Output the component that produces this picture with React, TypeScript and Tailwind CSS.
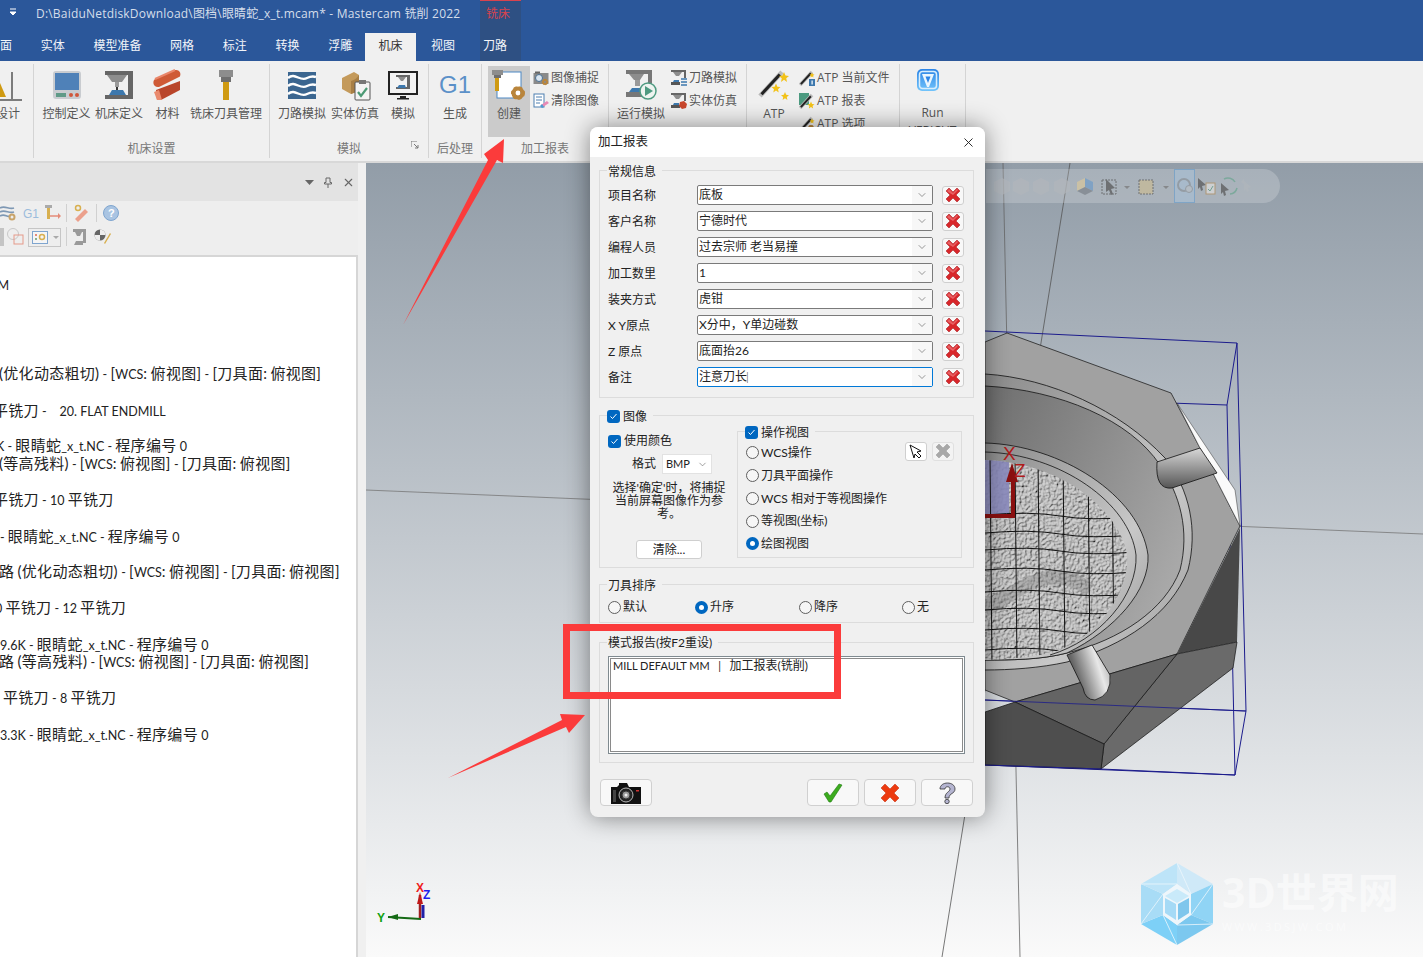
import { FC, ReactNode } from 'react'
import { ChevronDown, X } from 'lucide-react'

// ---------- ribbon icons ----------
const Svg: FC<{ w?: number, h?: number, children: ReactNode }> = ({ w = 32, h = 32, children }) => (
  <svg width={w} height={h} viewBox={`0 0 ${w} ${h}`} className="shrink-0">{children}</svg>
)

const IconControl = () => (
  <Svg>
    <rect x="2" y="2" width="28" height="28" rx="3" fill="#c9ccd0" />
    <rect x="4" y="4" width="24" height="17" fill="#4f81b8" />
    <rect x="5" y="24" width="10" height="4" fill="#5f9a87" />
    <circle cx="20" cy="26" r="2" fill="#d0573a" />
    <circle cx="26" cy="26" r="2" fill="#d0573a" />
  </Svg>
)
const IconMachine = () => (
  <Svg>
    <path d="M2 2h28v28H2v-4h23V6H2z" fill="#666" />
    <path d="M4 6h20l-5 7h-10z" fill="#8d8d8d" />
    <rect x="12" y="13" width="4" height="5" fill="#9a9a9a" />
    <rect x="13" y="18" width="2" height="3" fill="#333" />
    <path d="M6 26l3-5h11l3 5z" fill="#3d78ad" />
  </Svg>
)
const IconMaterial = () => (
  <Svg>
    <path d="M3 10L23 1c5-1 7 5 4 7L7 18c-6 1-7-6-4-8z" fill="#cf5a36" />
    <path d="M3 10L23 1" stroke="#e9866a" strokeWidth="2" />
    <path d="M4 21l24-9v9L9 31H5z" fill="#b9452a" />
    <path d="M2 23l5-2 3 10H5z" fill="#ea8a6e" />
  </Svg>
)
const IconTool = () => (
  <Svg>
    <rect x="9" y="1" width="14" height="7" fill="#8d8d8d" />
    <rect x="11" y="8" width="10" height="5" fill="#6f6f6f" />
    <rect x="13" y="13" width="6" height="18" fill="#cf9a12" />
  </Svg>
)
const IconWaves = () => (
  <Svg>
    <rect x="2" y="3" width="28" height="27" fill="#3b6690" />
    <path d="M2 9c7-6 12 4 19 0 4-2 6-2 9-1M2 17c7-6 12 4 19 0 4-2 6-2 9-1M2 25c7-6 12 4 19 0 4-2 6-2 9-1" stroke="#fff" strokeWidth="2.4" fill="none" />
  </Svg>
)
const IconSolidSim = () => (
  <Svg>
    <path d="M3 9l12-6 5 3v16l-8 3-9-5z" fill="#c49a5b" />
    <path d="M12 12c4-1 6-3 8-6v16l-8 3z" fill="#a87f45" />
    <rect x="16" y="13" width="15" height="18" rx="1" fill="#f4f4f4" stroke="#555" />
    <rect x="20" y="11" width="7" height="4" fill="#777" />
    <path d="M19 23l3 4 6-8" stroke="#4c9a75" strokeWidth="2.2" fill="none" />
  </Svg>
)
const IconMonitor = () => (
  <Svg>
    <rect x="1" y="2" width="30" height="24" fill="#222" />
    <rect x="3" y="4" width="26" height="20" fill="#f3f3f3" />
    <path d="M9 6h14v14H9v-2h11V8H9z" fill="#666" />
    <path d="M11 8h8l-3 4h-2z" fill="#8d8d8d" />
    <path d="M10 19l2-3h6l1 3z" fill="#3d78ad" />
    <rect x="13" y="27" width="6" height="2" fill="#222" />
    <rect x="10" y="29" width="12" height="1.5" fill="#222" />
  </Svg>
)
const Gear: FC<{ x: number, y: number, r: number }> = ({ x, y, r }) => (
  <g>
    <circle cx={x} cy={y} r={r} fill="none" stroke="#b9853c" strokeWidth={r * 0.9} />
    <circle cx={x} cy={y} r={r * 1.35} fill="none" stroke="#b9853c" strokeWidth={r * 0.4} strokeDasharray={`${r * 0.7} ${r * 0.6}`} />
  </g>
)
const IconCreate = () => (
  <Svg w={34} h={32}>
    <rect x="5" y="3" width="24" height="26" fill="#fff" stroke="#4d88c4" />
    <rect x="0" y="1" width="11" height="5" fill="#8d8d8d" />
    <rect x="2" y="6" width="7" height="3" fill="#6f6f6f" />
    <rect x="3" y="9" width="4" height="13" fill="#cf9a12" />
    <Gear x={26} y={24} r={4.5} />
  </Svg>
)
const IconCapture = () => (
  <Svg w={16} h={16}>
    <rect x="0.5" y="3" width="15" height="11" fill="#8a8a8a" />
    <rect x="2" y="1.5" width="5" height="2" fill="#666" />
    <circle cx="6" cy="8" r="3.5" fill="#d9e5f0" stroke="#4a6f90" />
    <Gear x={12} y={12} r={2} />
  </Svg>
)
const IconClear = () => (
  <Svg w={16} h={16}>
    <rect x="1" y="1" width="10" height="13" fill="#fff" stroke="#4d7fb0" />
    <path d="M3 4h6M3 7h6M3 10h4" stroke="#4d7fb0" />
    <path d="M8 12l6-4 2 2-6 4z" fill="#e889b5" />
    <path d="M7 13l2-2 2 3-2 1z" fill="#4d9ad0" />
  </Svg>
)
const IconRunSim = () => (
  <Svg w={32} h={32}>
    <path d="M1 1h26v14h-4V5H1z" fill="#777" />
    <path d="M4 5h15l-4 6h-6z" fill="#8d8d8d" />
    <rect x="10" y="11" width="5" height="6" fill="#9a9a9a" />
    <path d="M4 23l3-4h9v4z" fill="#3d78ad" />
    <rect x="1" y="23" width="16" height="5" fill="#777" />
    <circle cx="23" cy="22" r="8" fill="#eef4f0" stroke="#4d9a80" strokeWidth="1.5" />
    <path d="M20 17l8 5-8 5z" fill="#4d9a80" />
  </Svg>
)
const IconSmallMachine: FC<{ red?: boolean }> = ({ red }) => (
  <Svg w={16} h={16}>
    <path d="M0 0h15v8h-2V2H0z" fill="#666" />
    <path d="M2 2h9l-3 4H5z" fill="#8d8d8d" />
    <rect x="0" y="12" width="9" height="3" fill="#555" />
    <path d="M2 12l1-2h5v2z" fill="#3d78ad" />
    {red ? <path d="M9 9l4-1 3 3-1 4-4 1-3-3z" fill="#c9472c" /> : <path d="M10 9h6M10 12h6M10 15h6" stroke="#3d78ad" strokeWidth="1.5" />}
  </Svg>
)
const Wand: FC<{ x1: number, y1: number, x2: number, y2: number, w: number }> = ({ x1, y1, x2, y2, w }) => (
  <g>
    <line x1={x1} y1={y1} x2={x2} y2={y2} stroke="#bbb" strokeWidth={w + 1.5} />
    <line x1={x1 + (x2 - x1) * 0.07} y1={y1 + (y2 - y1) * 0.07} x2={x1 + (x2 - x1) * 0.9} y2={y1 + (y2 - y1) * 0.9} stroke="#222" strokeWidth={w} />
  </g>
)
const Star: FC<{ x: number, y: number, r: number }> = ({ x, y, r }) => (
  <polygon fill="#f2c218" points={`${x},${y - r} ${x + r * 0.3},${y - r * 0.3} ${x + r},${y - r * 0.2} ${x + r * 0.45},${y + r * 0.25} ${x + r * 0.6},${y + r} ${x},${y + r * 0.55} ${x - r * 0.6},${y + r} ${x - r * 0.45},${y + r * 0.25} ${x - r},${y - r * 0.2} ${x - r * 0.3},${y - r * 0.3}`} />
)
const IconAtp = () => (
  <Svg>
    <Wand x1={2} y1={27} x2={24} y2={3} w={3} />
    <Star x={26} y={8} r={5} />
    <Star x={18} y={19} r={4.5} />
    <Star x={27} y={27} r={4} />
  </Svg>
)
const IconAtpSmall: FC<{ kind: 'file' | 'report' | 'option' }> = ({ kind }) => (
  <Svg w={16} h={16}>
    {kind === 'report' && <path d="M0 0h10v12H0z" fill="#4c9a80" />}
    <Wand x1={1} y1={15} x2={13} y2={2} w={2} />
    {kind === 'file' && <><rect x="10" y="9" width="6" height="7" fill="#3d78ad" /><rect x="12.5" y="10.5" width="1.2" height="4" fill="#fff" /></>}
    {kind === 'report' && <Star x={12} y={12} r={3.5} />}
    {kind === 'option' && <Gear x={12} y={12} r={2} />}
    {kind !== 'report' && <Star x={13} y={5} r={2.5} />}
  </Svg>
)
const IconVericut = () => (
  <Svg w={24} h={24}>
    <defs>
      <linearGradient id="vcut" x1="0" y1="0" x2="0" y2="1">
        <stop offset="0" stopColor="#2b84e6" />
        <stop offset="1" stopColor="#72c4fb" />
      </linearGradient>
    </defs>
    <rect x="1" y="1" width="22" height="22" rx="5" fill="url(#vcut)" />
    <rect x="3.500" y="3.500" width="17" height="17" rx="3" fill="none" stroke="#d9eefc" strokeWidth="1.500" />
    <path d="M6 6h12l-5 13h-2z" fill="#eaf6fe" />
    <path d="M9.500 8.500h5L12 15z" fill="#2b84e6" />
  </Svg>
)

const RibbonLabel: FC<{ children: ReactNode }> = ({ children }) => (
  <span className="text-xs leading-4 text-[#555] whitespace-nowrap">{children}</span>
)
const LargeBtn: FC<{ w: string, icon: ReactNode, label: string, active?: boolean }> = ({ w, icon, label, active }) => (
  <div className={`${w} flex h-[71px] flex-col items-center ${active ? 'bg-[#cbcbcb]' : ''}`}>
    <div className="flex h-[38px] items-start justify-center pt-[3px]">{icon}</div>
    <div className="leading-4"><RibbonLabel>{label}</RibbonLabel></div>
  </div>
)
const SmallBtn: FC<{ icon: ReactNode, label: string }> = ({ icon, label }) => (
  <div className="flex h-[23px] items-center gap-[2px]">{icon}<RibbonLabel>{label}</RibbonLabel></div>
)
const Group: FC<{ w: string, label?: string, children: ReactNode, launcher?: boolean, pad?: string }> = ({ w, label, children, launcher, pad = '' }) => (
  <div className={`${w} relative flex shrink-0 flex-col border-r border-[#d4d4d4] my-[1px] h-[94px]`}>
    <div className={`flex h-[72px] mt-[2px] ${pad}`}>{children}</div>
    <div className="mt-[3px] text-center text-xs leading-4 text-[#777]">{label}</div>
    {launcher && (
      <svg width="8" height="8" viewBox="0 0 8 8" className="absolute right-[9px] bottom-[9px]">
        <path d="M0 6V0h6M3 3l4 4M7 4v3H4" fill="none" stroke="#777" />
      </svg>
    )}
  </div>
)

const tabs = ['实体', '模型准备', '网格', '标注', '转换', '浮雕']

const TopBar = () => (
  <div className="relative h-[61px] shrink-0 bg-[#2b579a]">
    <div className="flex h-[33px] items-start">
      <svg width="8" height="8" viewBox="0 0 8 8" className="mt-[8px] ml-[9px]">
        <path d="M1 1h6M1 4h6L4 7z" stroke="#fff" fill="#fff" />
      </svg>
      <span className="ml-[19px] mt-[5px] text-xs leading-[18px] tracking-[0.2px] whitespace-nowrap text-[#d5deeb]">D:\BaiduNetdiskDownload\图档\眼睛蛇_x_t.mcam* - Mastercam 铣削 2022</span>
    </div>
    <div className="flex h-[26px] items-center gap-[28.700px] text-xs text-[#f3f5f9]">
      <div className="w-[12px] shrink-0 overflow-hidden">面</div>
      {tabs.map((t) => (
        <div key={t} className="shrink-0">{t}</div>
      ))}
    </div>
    <div className="absolute top-0 left-[480px] flex h-[61px] w-[41px] flex-col border-t border-[#d9434e] bg-[#2e5083] text-xs">
      <span className="mt-[5px] ml-[6px] text-[#d9434e]">铣床</span>
      <span className="mt-[16px] ml-[3px] text-[#f3f5f9]">刀路</span>
    </div>
    <div className="absolute top-[33px] left-[365px] flex h-[29px] w-[51px] items-center justify-center bg-[#f0f0f0] pb-[3px] text-xs text-[#333]">机床</div>
    <div className="absolute top-[38px] left-[423px] w-[40px] text-center text-xs leading-[16px] text-[#f3f5f9]">视图</div>
  </div>
)

const Ribbon = () => (
  <div className="flex h-[102px] shrink-0 items-start overflow-hidden border-b-2 border-[#d8d8d8] bg-[#f0f0f0] pt-[2px]">
    <Group w="w-[34px]">
      <div className="relative w-[33px]">
        <svg width="24" height="32" viewBox="0 0 24 32" className="absolute top-[5px] left-0">
          <path d="M0 12L6 26H0z" fill="#cf9a12" />
          <path d="M12 1v27M0 29h22" stroke="#555" strokeWidth="1.5" />
        </svg>
        <div className="absolute top-[38px] right-[13px] leading-4"><RibbonLabel>设计</RibbonLabel></div>
      </div>
    </Group>
    <Group w="w-[236px]" label="机床设置" pad="pl-[6px]">
      <LargeBtn w="w-[53px]" icon={<IconControl />} label="控制定义" />
      <LargeBtn w="w-[52px]" icon={<IconMachine />} label="机床定义" />
      <LargeBtn w="w-[45px]" icon={<IconMaterial />} label="材料" />
      <LargeBtn w="w-[72px]" icon={<IconTool />} label="铣床刀具管理" />
    </Group>
    <Group w="w-[159px]" label="模拟" pad="pl-[6px]" launcher>
      <LargeBtn w="w-[52px]" icon={<IconWaves />} label="刀路模拟" />
      <LargeBtn w="w-[54px]" icon={<IconSolidSim />} label="实体仿真" />
      <LargeBtn w="w-[42px]" icon={<IconMonitor />} label="模拟" />
    </Group>
    <Group w="w-[53px]" label="后处理">
      <div className="w-full">
        <div className="flex h-[38px] justify-center pt-[2px] text-[24px] leading-[34px] text-[#5b90c8] [font-family:'Liberation_Sans',sans-serif]">G1</div>
        <div className="text-center leading-4"><RibbonLabel>生成</RibbonLabel></div>
      </div>
    </Group>
    <Group w="w-[127px]" label="加工报表" pad="pl-[6px]">
      <LargeBtn w="w-[42px]" icon={<IconCreate />} label="创建" active />
      <div className="ml-[3px] flex flex-col">
        <SmallBtn icon={<IconCapture />} label="图像捕捉" />
        <SmallBtn icon={<IconClear />} label="清除图像" />
      </div>
    </Group>
    <Group w="w-[138px]" pad="pl-[6px]">
      <LargeBtn w="w-[52px]" icon={<IconRunSim />} label="运行模拟" />
      <div className="ml-[4px] flex flex-col">
        <SmallBtn icon={<IconSmallMachine />} label="刀路模拟" />
        <SmallBtn icon={<IconSmallMachine red />} label="实体仿真" />
      </div>
    </Group>
    <Group w="w-[153px]" pad="pl-[10px]">
      <LargeBtn w="w-[34px]" icon={<IconAtp />} label="ATP" />
      <div className="ml-[8px] flex flex-col">
        <SmallBtn icon={<IconAtpSmall kind="file" />} label="ATP 当前文件" />
        <SmallBtn icon={<IconAtpSmall kind="report" />} label="ATP 报表" />
        <SmallBtn icon={<IconAtpSmall kind="option" />} label="ATP 选项" />
      </div>
    </Group>
    <Group w="w-[66px]">
      <div className="flex w-full flex-col items-center pt-[2px]">
        <div className="mr-[10px]"><IconVericut /></div>
        <div className="mt-[11px] text-center leading-4"><RibbonLabel>Run</RibbonLabel><br /><RibbonLabel>VERICUT</RibbonLabel></div>
      </div>
    </Group>
  </div>
)

// ---------- left panel ----------
const lines: [string, string][] = [
  ['mt-[18px] ml-[-14px]', 'MM'],
  ['mt-[71px] ml-[-1px]', '(优化动态粗切) - [WCS: 俯视图] - [刀具面: 俯视图]'],
  ['mt-[19px] ml-[-7px]', '平铣刀 -    20. FLAT ENDMILL'],
  ['mt-[17px] ml-[-4px]', 'K - 眼睛蛇_x_t.NC - 程序编号 0'],
  ['mt-0 ml-[-1px]', '(等高残料) - [WCS: 俯视图] - [刀具面: 俯视图]'],
  ['mt-[18px] ml-[-7px]', '平铣刀 - 10 平铣刀'],
  ['mt-[19px] ml-0', '- 眼睛蛇_x_t.NC - 程序编号 0'],
  ['mt-[17px] ml-[-1px]', '路 (优化动态粗切) - [WCS: 俯视图] - [刀具面: 俯视图]'],
  ['mt-[18px] ml-[-5px]', '0 平铣刀 - 12 平铣刀'],
  ['mt-[19px] ml-0', '9.6K - 眼睛蛇_x_t.NC - 程序编号 0'],
  ['mt-[-1px] ml-[-1px]', '路 (等高残料) - [WCS: 俯视图] - [刀具面: 俯视图]'],
  ['mt-[18px] ml-[3px]', '平铣刀 - 8 平铣刀'],
  ['mt-[19px] ml-0', '3.3K - 眼睛蛇_x_t.NC - 程序编号 0'],
]

// the CJK glyphs and brackets in this log run larger than the latin ones
const Mixed: FC<{ text: string }> = ({ text }) => (
  <>
    {text.split(/([\u4e00-\u9fff()\[\]:]+)/).map((part, i) =>
      i % 2 === 1
        ? <span key={i} className="text-[15px] tracking-[0.3px]">{part}</span>
        : <span key={i} className="text-[12.500px]">{part}</span>
    )}
  </>
)

const DockToolbar = () => (
  <div className="flex h-[54px] flex-col bg-[#eeeeee] pr-[1px]">
    <div className="flex h-[24px] items-center">
      <svg width="120" height="20" viewBox="0 0 120 20">
        <path d="M0 5c5-3 9 2 14 0M0 9c5-3 9 2 14 0M0 13c5-3 7 2 10 0" stroke="#7e98b4" strokeWidth="1.6" fill="none" />
        <circle cx="12" cy="14" r="2.5" fill="none" stroke="#c9a46a" strokeWidth="2" />
        <text x="23" y="15" fontSize="12" fill="#9cbcdc" fontFamily="Liberation Sans">G1</text>
        <rect x="45" y="2" width="7" height="3" fill="#aaa" />
        <rect x="47" y="5" width="3" height="11" fill="#d8b050" />
        <path d="M50 13h8" stroke="#e48b78" strokeWidth="1.5" />
        <path d="M58 10l3 3-3 3z" fill="#e48b78" />
        <line x1="66.500" y1="1" x2="66.500" y2="19" stroke="#d0d0d0" />
        <path d="M75 16l10-10 3 3-10 10z" fill="#eba08c" />
        <circle cx="78" cy="5" r="2.500" fill="none" stroke="#d8b050" strokeWidth="1.500" />
        <line x1="96.500" y1="1" x2="96.500" y2="19" stroke="#d0d0d0" />
        <circle cx="111" cy="10" r="7.500" fill="#a9c4e2" stroke="#7fa5cf" />
        <text x="108" y="14" fontSize="11" fontWeight="700" fill="#fff" fontFamily="Liberation Sans">?</text>
      </svg>
    </div>
    <div className="flex h-[24px] items-center">
      <svg width="120" height="22" viewBox="0 0 120 22">
        <rect x="0" y="2" width="4" height="18" fill="#c4c4c4" />
        <circle cx="13" cy="8" r="5.500" fill="none" stroke="#c8c8c8" />
        <rect x="14" y="9" width="9" height="9" fill="none" stroke="#e59a8a" />
        <rect x="28.500" y="2.500" width="32" height="18" fill="none" stroke="#c6c6c6" />
        <rect x="32.500" y="5.500" width="15" height="12" fill="#f5f5f5" stroke="#7fa5cf" />
        <rect x="35" y="8" width="2" height="2" fill="#e48b78" />
        <rect x="35" y="12" width="2" height="2" fill="#8cb08c" />
        <circle cx="42" cy="11" r="2.500" fill="none" stroke="#d8b050" strokeWidth="1.500" />
        <path d="M53 10h6l-3 3z" fill="#aaa" />
        <line x1="66.500" y1="1" x2="66.500" y2="20" stroke="#d0d0d0" />
        <path d="M73 3h13v14h-3V6H73zM75 6h7l-2 4h-3zM74 19l2-4h7v4z" fill="#9a9a9a" />
        <circle cx="100" cy="9" r="5.500" fill="#666" />
        <path d="M100 3.500a5.500 5.500 0 0 1 5.500 5.500h-5.500zM100 9h-5.500a5.500 5.500 0 0 0 5.500 5.500z" fill="#eee" />
        <path d="M104 17l6-10 1 1-6 10z" fill="#d8b050" />
      </svg>
    </div>
  </div>
)

const LeftPanel = () => (
  <div className="flex w-[358px] shrink-0 flex-col bg-[#e3e3e3]">
    <div className="flex h-[38px] items-center justify-end gap-[9px] pr-[3px]">
      <svg width="9" height="6" viewBox="0 0 9 6" className="mt-[2px]"><path d="M0 0h9L4.500 5z" fill="#666" /></svg>
      <svg width="10" height="11" viewBox="0 0 10 11"><path d="M3 1h4v4.500h1.500V7H1.500V5.500H3zM5 7v4" fill="none" stroke="#666" /></svg>
      <X size={13} strokeWidth={2} className="text-[#666]" />
    </div>
    <DockToolbar />
    <div className="min-h-0 flex-1 overflow-hidden border-t-2 border-r-2 border-[#d6d6d6] bg-white text-[15px] leading-[18px] text-[#222] [font-family:'Lato','Noto_Sans_CJK_SC',sans-serif]">
      {lines.map(([c, t]) => (
        <div key={t} className={`${c} h-[18px] whitespace-pre`}><Mixed text={t} /></div>
      ))}
    </div>
  </div>
)

// ---------- 3D view ----------
const gridH = [515, 533, 550, 570, 592, 610, 630, 650]
const gridV = [990, 1015, 1038, 1063, 1088, 1112]
const floor = 'M985,460 C1060,462 1120,510 1127,555 C1130,600 1085,650 1040,655 C1020,658 1000,660 985,660 Z'

const Model = () => (
  <svg viewBox="366 163 1057 794" className="absolute inset-0 h-full w-full">
    <defs>
      <linearGradient id="wall" x1="0" y1="0" x2="1" y2="0.6">
        <stop offset="0" stopColor="#6e6e6e" />
        <stop offset="1" stopColor="#a8a8a8" />
      </linearGradient>
      <linearGradient id="tube" x1="0" y1="0" x2="1" y2="1">
        <stop offset="0" stopColor="#8a8a8a" />
        <stop offset="0.65" stopColor="#c8c8c8" />
        <stop offset="1" stopColor="#9a9a9a" />
      </linearGradient>
      <linearGradient id="pipe" x1="0" y1="0" x2="0" y2="1">
        <stop offset="0" stopColor="#d8d8d8" />
        <stop offset="1" stopColor="#555" />
      </linearGradient>
      <linearGradient id="pipe2" x1="0" y1="0" x2="1" y2="-0.4">
        <stop offset="0" stopColor="#666" />
        <stop offset="0.5" stopColor="#e8e8e8" />
        <stop offset="1" stopColor="#777" />
      </linearGradient>
      <clipPath id="floor"><path d={floor} /></clipPath>
      <filter id="scales" x="0" y="0" width="1" height="1">
        <feTurbulence type="fractalNoise" baseFrequency="0.38" numOctaves="2" seed="7" />
        <feDiffuseLighting surfaceScale="2.800" diffuseConstant="0.950" lightingColor="#ffffff">
          <feDistantLight azimuth="225" elevation="50" />
        </feDiffuseLighting>
      </filter>
    </defs>

    <line x1="1003" y1="163" x2="1020" y2="957" stroke="#666" strokeWidth="0.800" />
    <line x1="1070" y1="163" x2="942" y2="957" stroke="#555" strokeWidth="0.800" />
    <line x1="366" y1="490" x2="1423" y2="534" stroke="#777" strokeWidth="0.800" />

    <path d="M985,331 L1237,343 L1227,405 L1170,403" fill="none" stroke="#1c1c8c" />
    <path d="M1237,343 L1246,711 L1235,775 L985,765 M1227,405 L1235,775 M985,700 L1246,711" fill="none" stroke="#1c1c8c" />

    <polygon points="985,342 1007,333 1171,393 1200,448 1240,526 1177,654 1015,702 985,690" fill="#a1a1a1" stroke="#222" strokeWidth="0.800" />
    <polygon points="1177,403 1235,490 1240,526 1200,448" fill="#fafafa" stroke="#333" strokeWidth="0.500" />
    <polygon points="1240,528 1237,642 1177,654" fill="#484848" />
    <polygon points="1237,642 1233,668 1101,769 1104,744 1177,654" fill="#6a6a6a" stroke="#111" strokeWidth="0.700" />
    <polygon points="1015,702 1177,654 1104,744" fill="#646464" stroke="#111" strokeWidth="0.700" />
    <polygon points="1015,702 1104,744 1101,769 985,765 985,712" fill="#4e4e4e" stroke="#111" strokeWidth="0.700" />
    <path d="M985,765 L1101,769" stroke="#1c1c8c" fill="none" />
    <path d="M1101,769 L1235,775" stroke="#1c1c8c" fill="none" />
    <path d="M985,700 L1246,711" stroke="#1c1c8c" fill="none" strokeWidth="0.800" />

    <path d="M985,374 C1050,378 1120,410 1165,458 C1190,490 1198,530 1188,570 C1170,615 1125,645 1067,662 C1040,668 1010,670 985,670 Z" fill="url(#tube)" stroke="#111" strokeWidth="0.800" />
    <path d="M985,386 C1060,390 1130,420 1160,465 C1180,495 1190,530 1180,570 C1165,610 1120,640 1067,653 C1040,660 1010,660 985,660 Z" fill="url(#wall)" stroke="#111" strokeWidth="0.800" />
    <path d="M985,443 C1060,445 1140,495 1148,555 C1150,590 1115,630 1067,653 C1040,660 1010,660 985,660 Z" fill="url(#tube)" stroke="#111" strokeWidth="0.800" />
    <path d="M985,452 C1060,454 1130,503 1136,555 C1138,595 1100,640 1050,655" fill="none" stroke="#111" strokeWidth="0.800" />

    <g clipPath="url(#floor)">
      <rect x="985" y="455" width="150" height="210" fill="#aaa" filter="url(#scales)" />
      <rect x="985" y="455" width="150" height="210" fill="#777" opacity="0.300" />
      <path d="M985,610 C1020,590 1050,560 1090,590" stroke="#777" strokeWidth="14" fill="none" opacity="0.350" />
      <rect x="985" y="460" width="24" height="57" fill="#8a8abc" opacity="0.900" />
      {gridH.map((y) => (
        <path key={y} d={`M985,${y} Q1030,${y - 4} 1060,${y + 1} T1135,${y + 2}`} fill="none" stroke="#111" strokeWidth="1" />
      ))}
      {gridV.map((x) => (
        <path key={x} d={`M${x},455 L${x + 2},665`} fill="none" stroke="#111" strokeWidth="1" />
      ))}
    </g>

    <path d="M1157,462 L1200,448 L1217,473 L1172,488 Q1155,490 1157,462 Z" fill="url(#pipe)" stroke="#111" strokeWidth="0.800" />
    <path d="M1067,655 L1092,645 L1110,675 Q1112,695 1095,700 Q1085,700 1083,688 Z" fill="url(#pipe2)" stroke="#111" strokeWidth="0.800" />

    <path d="M985,516 H1013 V478" fill="none" stroke="#8a1010" strokeWidth="4" />
    <polygon points="1012,463 1018,482 1006,482" fill="#8a1010" />
    <text x="1003" y="460" fontSize="19" fill="#b01a1a" fontFamily="Liberation Sans">X</text>
    <text x="1014" y="477" fontSize="19" fill="#b01a1a" fontFamily="Liberation Sans">Z</text>

    <path d="M421,919 L388,917" stroke="#156a15" strokeWidth="2" />
    <polygon points="388,917 398,914 398,920" fill="#156a15" />
    <path d="M420,918 V895" stroke="#a02020" strokeWidth="2.500" />
    <path d="M423,918 V905" stroke="#2020a8" strokeWidth="3" />
    <polygon points="420,892 423,904 417,904" fill="#c01818" />
    <text x="416" y="892" fontSize="12" fontWeight="700" fill="#ee1c1c" fontFamily="Liberation Sans">X</text>
    <text x="423" y="899" fontSize="12" fontWeight="700" fill="#1c1cee" fontFamily="Liberation Sans">Z</text>
    <text x="377" y="922" fontSize="12" fontWeight="700" fill="#10a010" fontFamily="Liberation Sans">Y</text>
  </svg>
)

const FloatingBar = () => (
  <div className="absolute top-[6px] left-[620px] flex h-[34px] w-[294px] items-center rounded-r-[17px] bg-white/20">
    <svg width="270" height="34" viewBox="0 0 270 34" className="opacity-70">
      <path d="M8 13l8-4 8 4v9l-8 4-8-4z" fill="#b2b6bb" />
      <path d="M27 13l8-4 8 4v9l-8 4-8-4z" fill="#b2b6bb" />
      <path d="M47 13l8-4 8 4v9l-8 4-8-4z" fill="#b2b6bb" />
      <path d="M68 13l8-4 8 4v9l-8 4-8-4z" fill="#b2b6bb" />
      <path d="M91 13l8-4v9l-8 4z" fill="#d8c79c" />
      <path d="M99 9l8 4v9l-8-4z" fill="#6f9cc8" />
      <path d="M91 22l8-4 8 4-8 4z" fill="#7a8088" />
      <rect x="116" y="11" width="14" height="14" fill="none" stroke="#555" strokeDasharray="2 1" />
      <path d="M120 10l9 9-4 1 2 5-2 1-2-5-3 2z" fill="#555" />
      <path d="M138 17h6l-3 3z" fill="#777" />
      <rect x="153" y="11" width="14" height="14" fill="#c9bb96" stroke="#555" strokeDasharray="2 1" />
      <path d="M177 17h6l-3 3z" fill="#777" />
      <rect x="188.500" y="0.500" width="20" height="33" fill="#a8bed2" stroke="#6d9fcb" />
      <circle cx="198" cy="16" r="6" fill="none" stroke="#8b939b" strokeWidth="2" />
      <circle cx="203" cy="20" r="3.500" fill="#b8c0c8" stroke="#8b939b" />
      <path d="M212 9l8 7-4 1 1 4-2 1-1-4-2 2z" fill="#555" />
      <rect x="220" y="14" width="9" height="11" fill="#ddd" stroke="#b08b5a" />
      <path d="M222 20l2 2 3-5" stroke="#5a9a80" fill="none" />
      <path d="M235 14l8 7-4 1 1 4-2 1-1-4-2 2z" fill="#555" />
      <path d="M238 10a8 8 0 0 1 11 3M251 19a8 8 0 0 1-7 6" stroke="#6aa590" strokeWidth="1.500" fill="none" />
      <path d="M258 12l7 6-3 1 1 3-2 1-1-3-2 2zM258 10l-3 3 3 2" fill="#b0b6bb" />
    </svg>
  </div>
)

const Watermark = () => (
  <div className="absolute top-[699px] left-[774px] flex items-center gap-[8px]">
    <svg width="74" height="84" viewBox="0 0 74 84">
      <polygon points="37,1 73,22 51,32 37,22" fill="#cfe9f8" />
      <polygon points="73,22 73,62 51,53 51,32" fill="#90d4f5" />
      <polygon points="73,62 37,83 37,63 51,53" fill="#7cc8ef" />
      <polygon points="37,83 1,62 23,53 37,63" fill="#7dd0f7" />
      <polygon points="1,62 1,22 23,32 23,53" fill="#a8dcf6" />
      <polygon points="1,22 37,1 37,22 23,32" fill="#bde4f8" />
      <polygon points="37,22 51,32 51,53 37,63 23,53 23,32" fill="#eef6fb" />
      <polygon points="37,27 49,34 37,41 25,34" fill="#c9eafa" />
      <polygon points="25,36 36,42 36,58 25,51" fill="#a5daf6" />
      <polygon points="49,36 38,42 38,58 49,51" fill="#7fc6ec" />
      <path d="M37,1 L51,32 M73,22 L51,53 M73,62 L37,63 M37,83 L23,53 M1,62 L23,32 M1,22 L37,22" stroke="#eef6fb" strokeWidth="0.800" />
    </svg>
    <div className="mt-[-3px] flex flex-col text-white/50">
      <span className="text-[41px] leading-[40px] font-bold whitespace-nowrap">3D世界网</span>
      <span className="mt-[8px] text-[11px] leading-[14px] tracking-[2.400px] whitespace-nowrap">WWW.3DSJW.COM</span>
    </div>
  </div>
)

// ---------- dialog ----------
const Frame: FC<{ className: string, legend: ReactNode, children: ReactNode }> = ({ className, legend, children }) => (
  <div className={`relative border border-[#dcdcdc] ${className}`}>
    <div className="absolute top-[-7px] left-[7px] flex h-[14px] items-center bg-[#f0f0f0] pt-[1px] pr-[6px] text-xs leading-[14px]">{legend}</div>
    {children}
  </div>
)

const Check: FC<{ label: string }> = ({ label }) => (
  <span className="flex items-center gap-[3px] text-xs leading-[14px]">
    <span className="flex h-[13px] w-[13px] items-center justify-center rounded-[3px] bg-[#0067c0]">
      <svg width="9" height="9" viewBox="0 0 9 9"><path d="M1.500 4.500l2 2 4-4.500" stroke="#fff" fill="none" /></svg>
    </span>
    {label}
  </span>
)

const Radio: FC<{ label: string, on?: boolean }> = ({ label, on }) => (
  <span className="flex items-center gap-[2px] text-xs leading-[14px]">
    {on ? (
      <span className="flex h-[13px] w-[13px] items-center justify-center rounded-full bg-[#0067c0]">
        <span className="h-[5px] w-[5px] rounded-full bg-white" />
      </span>
    ) : (
      <span className="h-[13px] w-[13px] rounded-full border border-[#5f5f5f] bg-[#f6f6f6]" />
    )}
    {label}
  </span>
)

const RedX: FC<{ grey?: boolean }> = ({ grey }) => (
  <svg width="16" height="16" viewBox="0 0 16 16">
    <path d="M1 4l3-3 4 4 4-4 3 3-4 4 4 4-3 3-4-4-4 4-3-3 4-4z" fill={grey ? '#a8a8a8' : '#d8262a'} stroke={grey ? '#999' : '#a01015'} strokeWidth="0.500" />
    {!grey && <path d="M2 4l2-2 4 4 4-4 1 1-5 5-5-3z" fill="#f0787a" opacity="0.700" />}
  </svg>
)

const fields: [string, string][] = [
  ['项目名称', '底板'], ['客户名称', '宁德时代'], ['编程人员', '过去宗师 老当易撞'], ['加工数里', '1'],
  ['装夹方式', '虎钳'], ['X Y原点', 'X分中，Y单边碰数'], ['Z 原点', '底面抬26'], ['备注', '注意刀长'],
]

const FootBtn: FC<{ children: ReactNode }> = ({ children }) => (
  <div className="flex h-[27px] w-[52px] items-center justify-center rounded-[4px] border border-[#d0d0d0] bg-[#f8f8f8]">{children}</div>
)

const Dialog = () => (
  <div className="absolute top-[127px] left-[590px] z-10 flex h-[690px] w-[395px] flex-col overflow-hidden rounded-lg bg-[#f0f0f0] text-[#222] shadow-[0_0_24px_rgba(0,0,0,0.45)] [font-family:'Lato','Noto_Sans_CJK_SC',sans-serif]">
    <div className="flex h-[30px] shrink-0 items-center justify-between bg-white pr-[9px] pl-[8px] text-xs">
      <span className="text-[12.500px]">加工报表</span>
      <X size={15} strokeWidth={1.500} className="text-[#222]" />
    </div>

    <Frame className="mt-[13px] ml-[9px] h-[228px] w-[375px] pt-[14px]" legend={<span className="ml-[1px]">常规信息</span>}>
      <div className="flex flex-col gap-[6px]">
        {fields.map(([label, value], i) => (
          <div key={label} className="flex h-5 items-center pl-2 text-xs">
            <span className="w-[89px] shrink-0 pt-[2px]">{label}</span>
            <div className={`flex h-5 w-[236px] items-center rounded-[2px] border bg-white ${i === 7 ? 'border-[#0078d7]' : 'border-[#7a7a7a]'}`}>
              <span className="flex-1 pl-[1px] leading-[16px]">{value}{i === 7 && <span className="ml-[-1px] font-light">|</span>}</span>
              <span className="flex h-full w-5 items-center justify-center bg-[#f7f7f7]">
                <ChevronDown size={12} strokeWidth={1.200} className="text-[#555]" />
              </span>
            </div>
            <div className="ml-[9px] flex h-[19px] w-[22px] items-center justify-center rounded-[3px] border border-[#cfcfcf] bg-[#f8f8f8]"><RedX /></div>
          </div>
        ))}
      </div>
    </Frame>

    <Frame className="mt-[17px] ml-[9px] flex h-[153px] w-[375px]" legend={<Check label="图像" />}>
      <div className="w-[137px] shrink-0 pt-[18px] pl-2">
        <Check label="使用颜色" />
        <div className="mt-[6px] flex items-center pl-[24px] text-xs">
          <span className="w-[30px]">格式</span>
          <span className="flex h-5 w-[50px] items-center justify-between border border-[#e2e2e2] bg-white pr-[3px] pl-[3px] text-[11px]">
            BMP <ChevronDown size={11} strokeWidth={1.200} className="text-[#555]" />
          </span>
        </div>
        <p className="mt-[7px] ml-[1px] w-[120px] text-center text-xs leading-[13px]">选择'确定'时，将捕捉当前屏幕图像作为参考。</p>
        <div className="mt-[20px] ml-[28px] flex h-[19px] w-[66px] items-center justify-center rounded-[3px] border border-[#cfcfcf] bg-white text-xs">清除...</div>
      </div>
      <Frame className="mt-[15px] h-[127px] w-[225px] pt-[9px] pl-2" legend={<Check label="操作视图" />}>
        <div className="flex flex-col">
          <div className="flex h-[23px] items-center justify-between pr-[7px]">
            <Radio label="WCS操作" />
            <div className="mt-[-3px] flex gap-[5px]">
              <div className="flex h-[19px] w-[22px] items-center justify-center rounded-[3px] border border-[#cfcfcf] bg-white">
                <svg width="14" height="14" viewBox="0 0 14 14"><path d="M1 1l11 6-4 1 4 4-2 2-4-4-1 4z" fill="#fff" stroke="#111" /></svg>
              </div>
              <div className="flex h-[19px] w-[22px] items-center justify-center rounded-[3px] border border-[#e0e0e0] bg-[#f3f3f3]"><RedX grey /></div>
            </div>
          </div>
          <div className="flex h-[23px] items-center"><Radio label="刀具平面操作" /></div>
          <div className="flex h-[23px] items-center"><Radio label="WCS 相对于等视图操作" /></div>
          <div className="flex h-[22px] items-center"><Radio label="等视图(坐标)" /></div>
          <div className="flex h-[23px] items-center"><Radio label="绘图视图" on /></div>
        </div>
      </Frame>
    </Frame>

    <Frame className="mt-[16px] ml-[9px] flex h-[39px] w-[375px] items-start pt-[15px] pl-2" legend={<span className="ml-[1px]">刀具排序</span>}>
      <div className="w-[87px]"><Radio label="默认" /></div>
      <div className="w-[104px]"><Radio label="升序" on /></div>
      <div className="w-[103px]"><Radio label="降序" /></div>
      <Radio label="无" />
    </Frame>

    <Frame className="mt-[19px] ml-[9px] h-[121px] w-[375px] pt-[13px] pl-2" legend={<span className="mt-[-2px] ml-[1px]">模式报告(按F2重设)</span>}>
      <div className="h-[98px] w-[357px] border border-[#7f8a90] bg-white p-[1px]">
        <div className="h-full border border-[#8a8a8a] px-[2px] text-xs leading-[14px]"><span className="text-[11px]">MILL DEFAULT MM&nbsp;&nbsp; |&nbsp;&nbsp;</span><span className="ml-[3px]">加工报表(铣削)</span></div>
      </div>
    </Frame>

    <div className="mt-[16px] flex pr-[12px] pl-[10px]">
      <FootBtn>
        <svg width="30" height="22" viewBox="0 0 30 22">
          <path d="M0 5h6l2-2V1h8l2 4h12v17H0z" fill="#111" />
          <circle cx="15" cy="13" r="7" fill="#222" stroke="#ddd" strokeWidth="0.800" />
          <circle cx="15" cy="13" r="4" fill="#999" stroke="#333" />
          <circle cx="15" cy="13" r="1.500" fill="#eee" />
          <rect x="25" y="8" width="3" height="1.500" fill="#c33" />
          <rect x="2" y="8" width="3" height="12" fill="#444" />
        </svg>
      </FootBtn>
      <div className="ml-auto flex gap-[5px]">
        <FootBtn>
          <svg width="20" height="20" viewBox="0 0 20 20"><path d="M1 11l3-2 3 4 9-12 3 1-11 17h-2z" fill="#3cab1e" stroke="#1e7a10" strokeWidth="0.600" /></svg>
        </FootBtn>
        <FootBtn>
          <svg width="20" height="20" viewBox="0 0 20 20"><path d="M1 5l4-4 5 5 5-5 4 4-5 5 5 5-4 4-5-5-5 5-4-4 5-5z" fill="#ec3a10" stroke="#c02808" strokeWidth="0.500" /></svg>
        </FootBtn>
        <FootBtn>
          <svg width="20" height="22" viewBox="0 0 20 22"><path d="M3 7c0-8 15-8 15 0 0 5-6 4-6 9H8c0-6 5-6 5-9 0-3-5-3-5 0z" fill="#b4b4d0" stroke="#333" strokeWidth="0.800" /><circle cx="10" cy="19.500" r="2.200" fill="#b4b4d0" stroke="#333" strokeWidth="0.800" /></svg>
        </FootBtn>
      </div>
    </div>
  </div>
)

// red marks someone drew over the screenshot
const Annotations = () => (
  <>
    <svg viewBox="0 0 1423 957" className="pointer-events-none absolute inset-0 z-20 h-[957px] w-[1423px]">
      <polygon points="403,325 488,160 484,154 504,139 503,163 497,160" fill="#fb3b3b" />
      <polygon points="448,778 562,720 560,714 585,715 569,733 566,727" fill="#fb3b3b" />
    </svg>
    <div className="pointer-events-none absolute top-[624px] left-[563px] z-20 h-[75px] w-[278px] border-[7px] border-[#fb3b3b]" />
  </>
)

export default function App() {
  return (
    <div className="relative flex h-[957px] w-[1423px] flex-col overflow-hidden bg-[#f0f0f0] [font-family:'Open_Sans','Noto_Sans_CJK_SC',sans-serif]">
      <TopBar />
      <Ribbon />
      <div className="flex min-h-0 flex-1">
        <LeftPanel />
        <div className="w-2 shrink-0 bg-[#f0f0f0]" />
        <div className="relative flex-1 bg-gradient-to-b from-[#929da8] to-[#fafafa]">
          <Model />
          <FloatingBar />
          <Watermark />
        </div>
      </div>
      <Dialog />
      <Annotations />
    </div>
  )
}
